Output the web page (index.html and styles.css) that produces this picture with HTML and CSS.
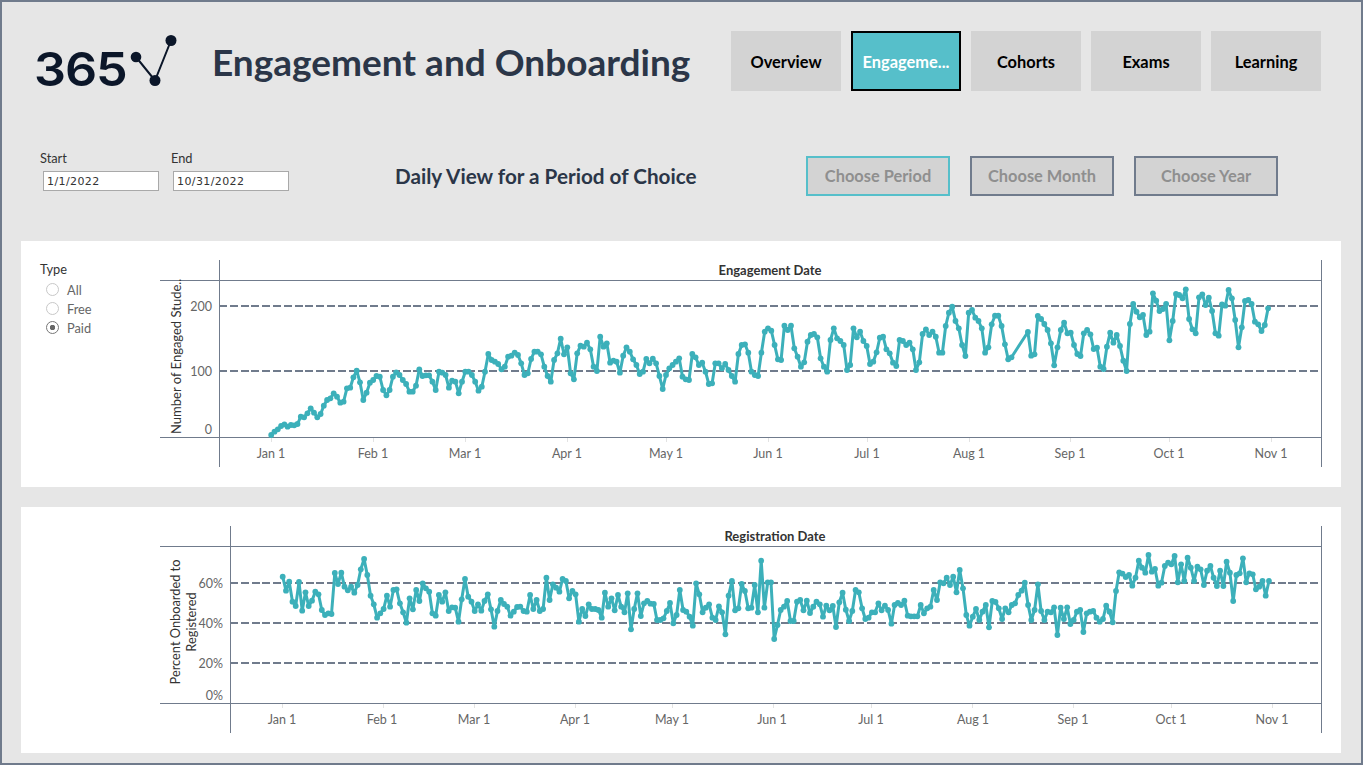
FILE: index.html
```html
<!DOCTYPE html>
<html lang="en">
<head>
<meta charset="utf-8">
<title>Engagement and Onboarding</title>
<link rel="stylesheet" href="styles.css">
</head>
<body>
<div class="page">
  <header class="header">
    <div class="logo">
      <span class="logo-text">365</span>
      <svg class="logo-mark" viewBox="129 35 49 53" width="49" height="53" aria-hidden="true">
        <polyline class="logo-line" points="136,57 155,80.5 171,40.5"/>
        <circle class="logo-dot" cx="136" cy="57" r="5.3"/>
        <circle class="logo-dot" cx="155" cy="80.5" r="5.5"/>
        <circle class="logo-dot" cx="171" cy="40.5" r="5.5"/>
      </svg>
    </div>
    <h1 class="title">Engagement and Onboarding</h1>
    <nav class="nav">
      <a class="tab">Overview</a>
      <a class="tab tab-active">Engageme...</a>
      <a class="tab">Cohorts</a>
      <a class="tab">Exams</a>
      <a class="tab">Learning</a>
    </nav>
  </header>

  <section class="filters">
    <label class="date-field">
      <span class="date-label">Start</span>
      <input class="date-input" type="text" value="1/1/2022" readonly>
    </label>
    <label class="date-field">
      <span class="date-label">End</span>
      <input class="date-input" type="text" value="10/31/2022" readonly>
    </label>
    <h2 class="subtitle">Daily View for a Period of Choice</h2>
    <div class="period-buttons">
      <button class="period period-active" type="button">Choose Period</button>
      <button class="period" type="button">Choose Month</button>
      <button class="period" type="button">Choose Year</button>
    </div>
  </section>

  <section class="panel panel-first">
    <aside class="side">
      <div class="side-title">Type</div>
      <div class="radio"><span class="radio-dot"></span>All</div>
      <div class="radio"><span class="radio-dot"></span>Free</div>
      <div class="radio"><span class="radio-dot radio-on"></span>Paid</div>
    </aside>
    <svg class="chart" id="engagement" viewBox="160 241 1181 246" width="1181" height="246">
      <g class="grid">
        <line x1="219" y1="306" x2="1321" y2="306"/>
        <line x1="219" y1="371" x2="1321" y2="371"/>
      </g>
      <g class="axes">
        <line x1="160" y1="280.5" x2="1321" y2="280.5"/>
        <line x1="160" y1="437.5" x2="1321" y2="437.5"/>
        <line x1="219.5" y1="260" x2="219.5" y2="467"/>
        <line x1="1321.5" y1="260" x2="1321.5" y2="467"/>
      </g>
      <g class="ticks">
        <line x1="271.5" y1="438" x2="271.5" y2="442"/><line x1="373.5" y1="438" x2="373.5" y2="442"/><line x1="465.5" y1="438" x2="465.5" y2="442"/><line x1="567.5" y1="438" x2="567.5" y2="442"/><line x1="666.5" y1="438" x2="666.5" y2="442"/><line x1="768.5" y1="438" x2="768.5" y2="442"/><line x1="867.5" y1="438" x2="867.5" y2="442"/><line x1="969.5" y1="438" x2="969.5" y2="442"/><line x1="1070.5" y1="438" x2="1070.5" y2="442"/><line x1="1169.5" y1="438" x2="1169.5" y2="442"/><line x1="1271.5" y1="438" x2="1271.5" y2="442"/>
      </g>
      <g class="series"></g>
      <text class="head" x="770" y="275">Engagement Date</text>
      <g class="ylab">
        <text x="212" y="311">200</text>
        <text x="212" y="376">100</text>
        <text x="212" y="434">0</text>
      </g>
      <text class="ytitle" transform="translate(181 434) rotate(-90)">Number of Engaged Stude..</text>
      <g class="xlab">
        <text x="271" y="458">Jan 1</text><text x="373" y="458">Feb 1</text><text x="465" y="458">Mar 1</text><text x="567" y="458">Apr 1</text><text x="666" y="458">May 1</text><text x="768" y="458">Jun 1</text><text x="867" y="458">Jul 1</text><text x="969" y="458">Aug 1</text><text x="1070" y="458">Sep 1</text><text x="1169" y="458">Oct 1</text><text x="1271" y="458">Nov 1</text>
      </g>
    </svg>
  </section>

  <section class="panel panel-second">
    <aside class="side"></aside>
    <svg class="chart" id="onboarding" viewBox="160 507 1181 246" width="1181" height="246">
      <g class="grid">
        <line x1="230" y1="583" x2="1321" y2="583"/>
        <line x1="230" y1="623" x2="1321" y2="623"/>
        <line x1="230" y1="663" x2="1321" y2="663"/>
      </g>
      <g class="axes">
        <line x1="160" y1="546.5" x2="1321" y2="546.5"/>
        <line x1="160" y1="703.5" x2="1321" y2="703.5"/>
        <line x1="230.5" y1="526" x2="230.5" y2="733"/>
        <line x1="1321.5" y1="526" x2="1321.5" y2="733"/>
      </g>
      <g class="ticks">
        <line x1="282.5" y1="704" x2="282.5" y2="708"/><line x1="383.5" y1="704" x2="383.5" y2="708"/><line x1="474.5" y1="704" x2="474.5" y2="708"/><line x1="575.5" y1="704" x2="575.5" y2="708"/><line x1="672.5" y1="704" x2="672.5" y2="708"/><line x1="773.5" y1="704" x2="773.5" y2="708"/><line x1="871.5" y1="704" x2="871.5" y2="708"/><line x1="972.5" y1="704" x2="972.5" y2="708"/><line x1="1073.5" y1="704" x2="1073.5" y2="708"/><line x1="1171.5" y1="704" x2="1171.5" y2="708"/><line x1="1272.5" y1="704" x2="1272.5" y2="708"/>
      </g>
      <g class="series"></g>
      <text class="head" x="775" y="541">Registration Date</text>
      <g class="ylab">
        <text x="223" y="588">60%</text>
        <text x="223" y="628">40%</text>
        <text x="223" y="668">20%</text>
        <text x="223" y="700">0%</text>
      </g>
      <g class="ytitle-mid">
        <text transform="translate(180 622) rotate(-90)">Percent Onboarded to</text>
        <text transform="translate(196 622) rotate(-90)">Registered</text>
      </g>
      <g class="xlab">
        <text x="282" y="724">Jan 1</text><text x="382" y="724">Feb 1</text><text x="474" y="724">Mar 1</text><text x="575" y="724">Apr 1</text><text x="672" y="724">May 1</text><text x="772" y="724">Jun 1</text><text x="871" y="724">Jul 1</text><text x="973" y="724">Aug 1</text><text x="1073" y="724">Sep 1</text><text x="1171" y="724">Oct 1</text><text x="1272" y="724">Nov 1</text>
      </g>
    </svg>
  </section>
</div>
<script src="chart.js"></script>
</body>
</html>
```
FILE: styles.css
```css
* { box-sizing: border-box; }
html, body { margin: 0; padding: 0; }
body { font-family: Lato, "Liberation Sans", sans-serif; }

.page {
  width: 1363px;
  height: 765px;
  background: #e6e6e6;
  border: 2px solid #707b8c;
  overflow: hidden;
}

.header {
  display: flex;
  align-items: center;
  height: 60px;
  margin-top: 29px;
  padding-left: 32px;
}
.logo { flex: none; display: flex; height: 53px; }
.logo-text {
  width: 95px;
  padding-top: 14px;
  font-family: Inter, sans-serif;
  font-size: 47px;
  line-height: 39px;
  font-weight: 600;
  letter-spacing: -1px;
  color: #0b1629;
  transform: scaleX(1.07);
  transform-origin: 0 50%;
}
.logo-mark { display: block; flex: none; }
.logo-line { fill: none; stroke: #0b1629; stroke-width: 2; }
.logo-dot { fill: #0b1629; }

.title {
  margin: 1px 0 0 34px;
  font-family: Lato, sans-serif;
  font-size: 37px;
  font-weight: 700;
  color: #2b3648;
  white-space: nowrap;
}
.nav { display: flex; gap: 10px; margin-left: auto; margin-right: 40px; }
.tab {
  width: 110px;
  height: 60px;
  display: flex;
  align-items: center;
  justify-content: center;
  background: #d3d3d3;
  color: #000;
  font-family: Lato, sans-serif;
  font-size: 16.4px;
  font-weight: 700;
}
.tab-active { background: #56bfca; color: #fff; border: 2px solid #000; }

.filters {
  display: flex;
  align-items: flex-end;
  height: 45px;
  margin-top: 60px;
  padding-left: 38px;
}
.date-field { display: flex; flex-direction: column; align-items: flex-start; width: 131px; height: 40px; align-self: flex-start; }
.date-label { font-size: 12.8px; line-height: 15px; color: #333; height: 20px; }
.date-input {
  width: 116px;
  height: 20px;
  margin-left: 3px;
  padding: 0 3px;
  border: 1px solid #a9a9a9;
  background: #fff;
  font-family: "DejaVu Sans", sans-serif;
  font-size: 11px;
  letter-spacing: 0.4px;
  color: #333;
  outline: none;
}
.date-field + .date-field .date-input { margin-left: 2px; }
.subtitle {
  margin: 0 0 0 -12px;
  padding-left: 105px;
  height: 40px;
  line-height: 40px;
  font-family: Lato, sans-serif;
  font-size: 20.7px;
  font-weight: 700;
  color: #2b3648;
  white-space: nowrap;
}
.period-buttons { display: flex; gap: 20px; margin-left: auto; margin-right: 83px; }
.period {
  width: 144px;
  height: 40px;
  padding: 0 0 2px;
  background: #d3d3d3;
  border: 2px solid #707b8c;
  color: #8f8f8f;
  font-family: Lato, sans-serif;
  font-size: 16.4px;
  font-weight: 700;
}
.period-active { border-color: #56bfca; }

.panel {
  display: flex;
  width: 1320px;
  height: 246px;
  margin-left: 19px;
  background: #fff;
}
.panel-first { margin-top: 45px; }
.panel-second { margin-top: 20px; }
.side { flex: none; width: 139px; padding: 20px 0 0 19px; }
.side-title { font-size: 12.8px; line-height: 16px; color: #333; margin-bottom: 3px; }
.radio {
  display: flex;
  align-items: center;
  gap: 8px;
  height: 19px;
  padding-left: 6px;
  font-size: 12.8px;
  color: #666;
}
.radio-dot {
  flex: none;
  width: 13px;
  height: 13px;
  border: 1px solid #c8c8c8;
  border-radius: 50%;
}
.radio-on {
  border-color: #777;
  background: radial-gradient(circle, #666 0 2.5px, #fff 3px);
}

.chart { display: block; flex: none; }
.grid line { stroke: #707b8c; stroke-width: 2; stroke-dasharray: 8 2.8; shape-rendering: crispEdges; }
.axes line { stroke: #707b8c; stroke-width: 1; shape-rendering: crispEdges; }
.ticks line { stroke: #e3e3e3; stroke-width: 1; shape-rendering: crispEdges; }
.series-line { fill: none; stroke: #3cb0ba; stroke-width: 3; stroke-linejoin: round; }
.series-dot { fill: #3cb0ba; }
.head { font-size: 13px; font-weight: 700; fill: #333; text-anchor: middle; }
.ylab text { font-size: 12.5px; fill: #666; text-anchor: end; }
.xlab text { font-size: 12.5px; fill: #666; text-anchor: middle; }
.ytitle { font-size: 13px; fill: #333; }
.ytitle-mid text { font-size: 12.8px; fill: #333; text-anchor: middle; }
```
FILE: chart.js
```js
var NS = "http://www.w3.org/2000/svg";
var n = null;

var engagement = [
  585,575,568,558,553,560,555,556,552,530,
  532,520,505,518,532,522,497,480,475,460,
  470,488,485,445,443,412,392,427,480,458,
  428,420,408,410,450,466,450,410,397,405,
  420,432,455,455,437,388,408,406,406,425,
  450,395,398,405,443,422,425,460,425,395,
  395,405,425,452,440,395,342,360,365,372,
  388,380,350,347,338,345,370,405,400,357,
  335,335,343,380,408,425,360,340,296,343,
  322,400,418,340,317,320,308,328,380,393,
  290,320,310,368,362,365,398,347,322,335,
  358,375,402,395,357,370,356,370,408,447,
  405,385,375,365,355,410,418,420,342,352,
  375,368,395,432,430,370,370,385,372,390,
  408,425,342,315,313,338,395,405,408,338,
  275,265,272,315,358,360,257,270,257,325,
  350,380,367,305,285,282,292,355,380,395,
  300,265,295,303,315,390,375,265,292,275,
  303,318,372,365,337,293,290,328,340,368,
  378,300,303,315,308,328,390,367,282,268,
  285,275,290,338,338,258,218,200,243,265,
  315,348,218,210,233,243,265,338,322,253,
  227,227,258,313,358,352,n,n,n,n,
  276,347,343,228,237,252,270,310,376,322,
  270,248,280,278,315,342,348,280,270,283,
  327,323,380,387,320,278,308,285,318,362,
  393,252,192,215,232,225,285,275,160,182,
  213,207,192,301,243,162,165,175,148,237,
  268,280,172,163,195,173,213,280,287,193,
  197,150,175,240,322,262,183,180,192,245,
  253,273,255,205
];

var onboarding = [
  215,257,230,290,303,231,317,262,303,287,
  260,268,315,330,325,327,204,237,203,245,
  256,245,263,240,193,162,210,272,298,338,
  325,312,272,305,255,253,295,322,353,280,
  313,255,288,235,250,260,325,332,270,290,
  262,318,307,308,350,283,222,275,290,318,
  298,317,288,268,313,365,318,285,297,305,
  332,320,306,305,318,320,270,312,285,318,
  312,218,285,238,248,260,222,228,280,258,
  268,350,312,333,298,312,312,315,338,263,
  305,280,316,270,305,322,265,373,312,265,
  333,295,288,296,297,345,345,340,318,294,
  355,330,255,315,320,335,362,235,268,322,
  308,298,338,345,304,322,388,272,228,316,
  310,237,258,310,308,240,322,167,308,232,
  232,402,360,315,305,288,348,348,290,285,
  316,287,324,305,290,298,335,302,316,303,
  366,292,263,314,348,318,255,262,310,342,
  338,322,322,295,316,302,315,356,300,294,
  300,287,332,334,334,334,300,325,310,305,
  255,285,232,235,218,240,215,262,195,250,
  330,362,335,312,345,320,300,367,288,291,
  310,342,310,322,300,295,270,257,233,300,
  345,315,238,318,345,320,322,307,390,308,
  342,307,357,345,320,315,381,325,320,318,
  338,350,342,302,320,352,258,202,206,216,
  210,242,218,167,188,203,150,200,192,242,
  233,183,173,178,153,232,178,228,158,188,
  228,185,193,240,197,183,218,243,197,243,
  170,203,288,210,205,160,232,205,208,253,
  245,228,272,228
];

function drawSeries(id, values, x0, step, top) {
  var group = document.querySelector("#" + id + " .series");
  var pts = [];
  values.forEach(function (v, i) {
    if (v === null) return;
    pts.push([x0 + i * step, top + v / 3]);
  });
  var line = document.createElementNS(NS, "polyline");
  line.setAttribute("class", "series-line");
  line.setAttribute("points", pts.map(function (p) { return p[0].toFixed(1) + "," + p[1].toFixed(1); }).join(" "));
  group.appendChild(line);
  pts.forEach(function (p) {
    var c = document.createElementNS(NS, "circle");
    c.setAttribute("class", "series-dot");
    c.setAttribute("cx", p[0].toFixed(1));
    c.setAttribute("cy", p[1].toFixed(1));
    c.setAttribute("r", "2.9");
    group.appendChild(c);
  });
}

drawSeries("engagement", engagement, 271.2, 3.29, 240);
drawSeries("onboarding", onboarding, 282.7, 3.255, 505);
```
